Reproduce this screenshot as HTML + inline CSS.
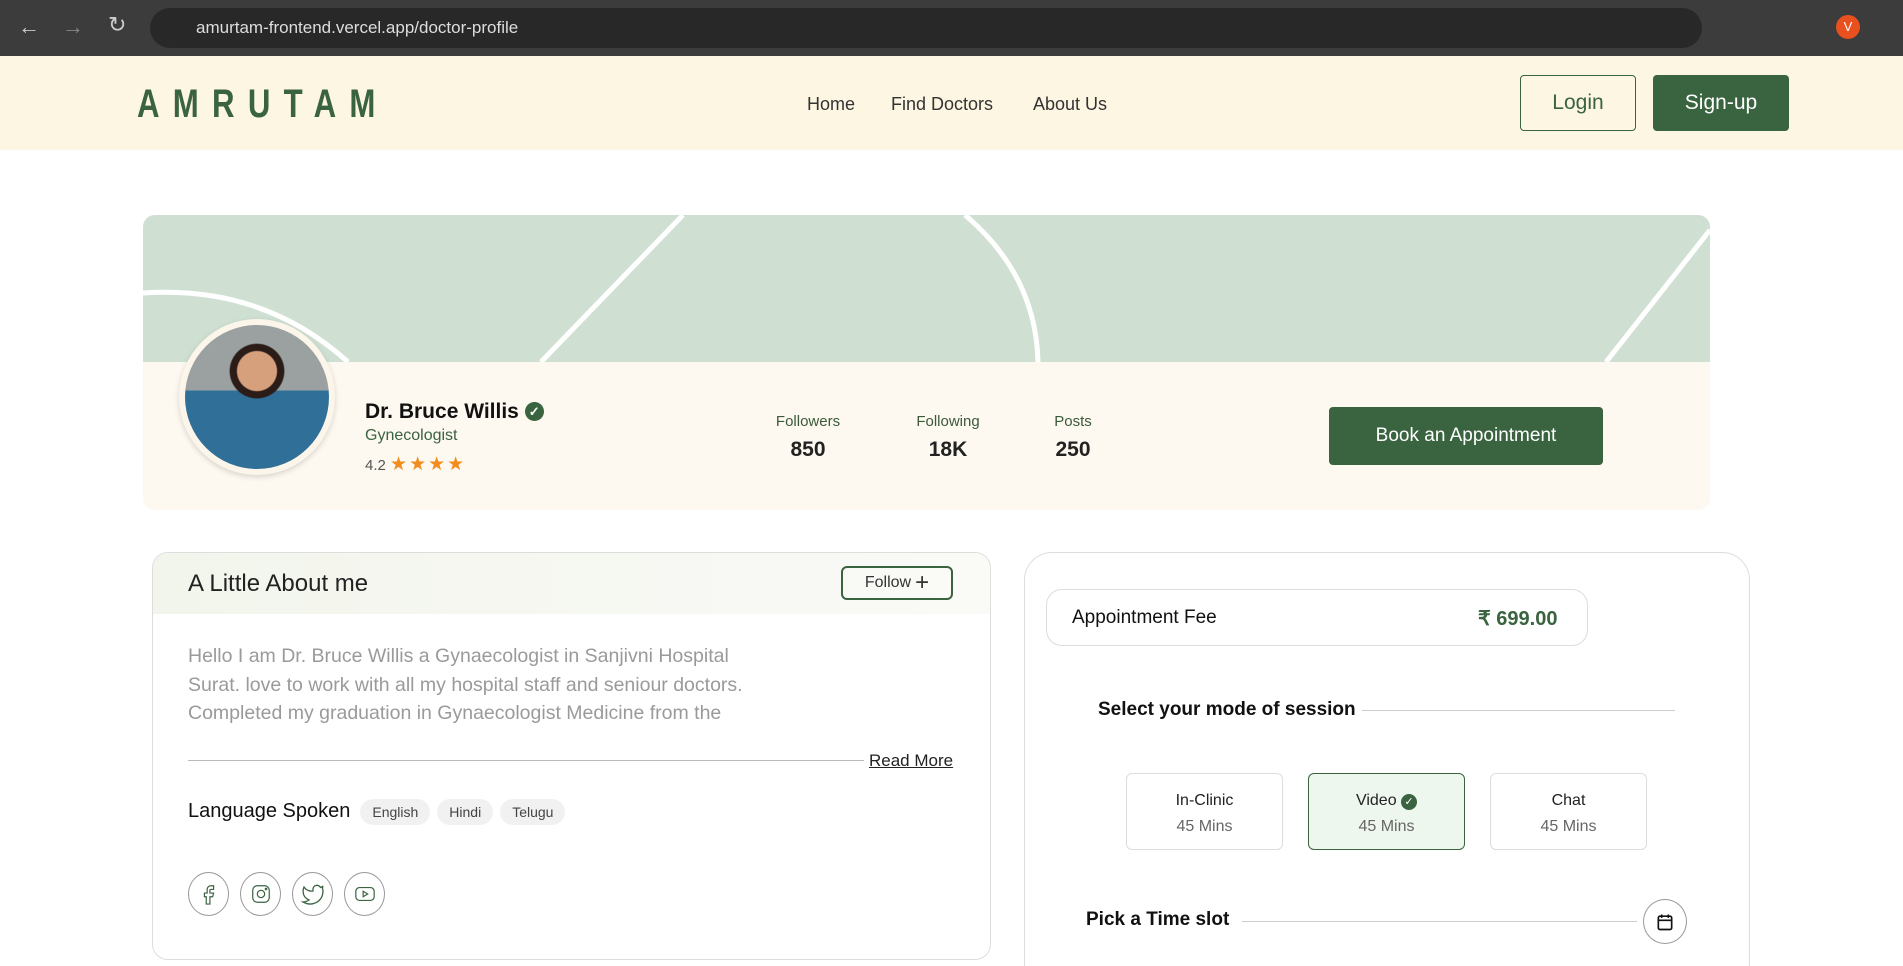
<!DOCTYPE html>
<html style="overflow:hidden;height:966px"><head><meta charset="utf-8"><style>
*{box-sizing:border-box;margin:0;padding:0}
body{width:1903px;height:966px;overflow:hidden;background:#fff;font-family:"Liberation Sans",sans-serif;color:#111}
#wrap{position:relative;width:1903px;height:966px;overflow:hidden}
.abs{position:absolute}
.chrome{left:0;top:0;width:1903px;height:56px;background:#3c3c3c}
.url{left:150px;top:8px;width:1552px;height:40px;border-radius:20px;background:#282828;color:#ddd;font-size:17px;line-height:40px;padding-left:46px}
.hdr{left:0;top:56px;width:1903px;height:94px;background:#fdf6e2}
.logo{left:137px;top:82px;font-size:40px;font-weight:bold;color:#3a6340;letter-spacing:17px;transform:scaleX(.78);transform-origin:left}
.nav{top:94px;font-size:18px;color:#333}
.btn{display:flex;align-items:center;justify-content:center;border-radius:4px;font-size:21px}
.green{background:#3a6340;color:#fff}
.card{left:143px;top:215px;width:1567px;height:295px;border-radius:12px;background:#fdf8f0;overflow:hidden}
.stat{text-align:center;width:140px}
.stat .l{font-size:15px;color:#3a5a3a}
.stat .v{font-size:21px;font-weight:bold;margin-top:8px;color:#222}
.box{border:1px solid #ddd;border-radius:16px;background:#fff}
.chip{display:inline-block;background:#f1f1f1;border-radius:14px;padding:5px 12px;font-size:14px;color:#444;margin-left:7px}
.soc{width:41px;height:44px;border:1px solid #999;border-radius:50%;display:flex;align-items:center;justify-content:center}
.mode{width:157px;height:77px;border:1px solid #ddd;border-radius:6px;text-align:center;font-size:16px;padding-top:18px;color:#222}
.mode .m{color:#666;margin-top:8px}
</style></head><body><div id="wrap">
<div class="abs chrome"></div>
<div class="abs" style="left:18px;top:14px;color:#ccc;font-size:22px">←</div>
<div class="abs" style="left:62px;top:14px;color:#888;font-size:22px">→</div>
<div class="abs" style="left:108px;top:12px;color:#ccc;font-size:22px">↻</div>
<div class="abs url">amurtam-frontend.vercel.app/doctor-profile</div>
<div class="abs" style="left:1836px;top:15px;width:24px;height:24px;border-radius:50%;background:#e8501f;color:#fff;font-size:13px;text-align:center;line-height:24px">V</div>
<div class="abs hdr"></div>
<div class="abs logo">AMRUTAM</div>
<div class="abs nav" style="left:807px">Home</div>
<div class="abs nav" style="left:891px">Find Doctors</div>
<div class="abs nav" style="left:1033px">About Us</div>
<div class="abs btn" style="left:1520px;top:75px;width:116px;height:56px;border:1.5px solid #3a6340;color:#3a6340">Login</div>
<div class="abs btn green" style="left:1653px;top:75px;width:136px;height:56px">Sign-up</div>

<div class="abs card">
<div style="position:absolute;left:0;top:0;width:1567px;height:147px;background:#cfe0d3"></div>
<svg style="position:absolute;left:0;top:0" width="1567" height="147"><g fill="none" stroke="#fff" stroke-width="5">
<path d="M0,78 Q120,70 205,147"/><path d="M540,0 L398,147"/><path d="M822,0 Q893,60 895,147"/><path d="M1567,15 L1463,147"/></g></svg>
</div>
<div class="abs" style="left:179px;top:319px;width:156px;height:156px;border-radius:50%;background:#fbf5ea;box-shadow:0 2px 6px rgba(0,0,0,.15)"></div>
<div class="abs" style="left:185px;top:325px;width:144px;height:144px;border-radius:50%;background:radial-gradient(circle at 50% 32%,#d7a07c 0 16%,#2b1c18 17% 22%,transparent 23%),linear-gradient(180deg,#9aa1a0 0 45%,#2f6f98 46% 100%);overflow:hidden"></div>
<div class="abs" style="left:365px;top:400px;font-size:21px;font-weight:bold;color:#111">Dr. Bruce Willis <span style="display:inline-block;width:19px;height:19px;border-radius:50%;background:#3a6340;color:#fff;font-size:13px;text-align:center;line-height:19px;vertical-align:2px">✓</span></div>
<div class="abs" style="left:365px;top:427px;font-size:16px;color:#3a6340">Gynecologist</div>
<div class="abs" style="left:365px;top:453px;font-size:15px;color:#555">4.2 <span style="color:#f28c1c;font-size:19px;letter-spacing:2px">★★★★</span></div>
<div class="abs stat" style="left:738px;top:413px"><div class="l">Followers</div><div class="v">850</div></div>
<div class="abs stat" style="left:878px;top:413px"><div class="l">Following</div><div class="v">18K</div></div>
<div class="abs stat" style="left:1003px;top:413px"><div class="l">Posts</div><div class="v">250</div></div>
<div class="abs btn green" style="left:1329px;top:407px;width:274px;height:58px;font-size:19px">Book an Appointment</div>

<div class="abs box" style="left:152px;top:552px;width:839px;height:408px;overflow:hidden">
<div style="height:61px;background:linear-gradient(90deg,#f2f5ec,#fafaf7)"></div>
</div>
<div class="abs" style="left:188px;top:570px;font-size:24px;color:#222">A Little About me</div>
<div class="abs btn" style="left:841px;top:566px;width:112px;height:34px;border:2px solid #3a6340;border-radius:6px;font-size:16px;color:#333">Follow <span style="font-size:24px;margin-left:4px">+</span></div>
<div class="abs" style="left:188px;top:642px;font-size:19.5px;line-height:28.5px;color:#9a9a9a">Hello I am Dr. Bruce Willis a Gynaecologist in Sanjivni Hospital<br>Surat. love to work with all my hospital staff and seniour doctors.<br>Completed my graduation in Gynaecologist Medicine from the</div>
<div class="abs" style="left:188px;top:760px;width:676px;height:1px;background:#bbb"></div>
<div class="abs" style="left:869px;top:751px;font-size:17px;color:#222;text-decoration:underline">Read More</div>
<div class="abs" style="left:188px;top:799px;font-size:20px;color:#111">Language Spoken<span class="chip" style="margin-left:10px">English</span><span class="chip">Hindi</span><span class="chip">Telugu</span></div>
<div class="abs" style="left:188px;top:872px;display:flex;gap:11px">
<div class="soc"><svg width="22" height="24" viewBox="0 0 24 24" fill="none" stroke="#3a6340" stroke-width="1.3"><path d="M14 3h3v4h-3a1 1 0 0 0-1 1v3h4l-1 4h-3v8h-4v-8H7v-4h3V7a4 4 0 0 1 4-4z"/></svg></div>
<div class="soc"><svg width="22" height="24" viewBox="0 0 24 24" fill="none" stroke="#3a6340" stroke-width="1.3"><rect x="3" y="3" width="18" height="18" rx="5"/><circle cx="12" cy="12" r="4"/><circle cx="17.5" cy="6.5" r=".8"/></svg></div>
<div class="soc"><svg width="24" height="24" viewBox="0 0 24 24" fill="none" stroke="#3a6340" stroke-width="1.3"><path d="M22 4s-1 1-2.5 1.5A4 4 0 0 0 12 8v1A9.5 9.5 0 0 1 3 5s-4 9 5 13a11 11 0 0 1-6 2c9 5 20 0 20-11.5 0-.3 0-.6-.1-.9C21 6.5 22 4 22 4z"/></svg></div>
<div class="soc"><svg width="22" height="22" viewBox="0 0 24 24" fill="none" stroke="#3a6340" stroke-width="1.3"><rect x="2" y="5" width="20" height="14" rx="4"/><path d="M10 9l5 3-5 3z"/></svg></div>
</div>

<div class="abs" style="left:1024px;top:552px;width:726px;height:460px;border:1px solid #ddd;border-radius:28px"></div>
<div class="abs box" style="left:1046px;top:589px;width:542px;height:57px"></div>
<div class="abs" style="left:1072px;top:607px;font-size:19px;color:#111">Appointment Fee</div>
<div class="abs" style="left:1478px;top:606px;font-size:20px;color:#3a6340;font-weight:bold">₹ 699.00</div>
<div class="abs" style="left:1098px;top:699px;font-size:19px;font-weight:bold;color:#111">Select your mode of session</div>
<div class="abs" style="left:1362px;top:710px;width:313px;height:1px;background:#ccc"></div>
<div class="abs mode" style="left:1126px;top:773px">In-Clinic<div class="m">45 Mins</div></div>
<div class="abs mode" style="left:1308px;top:773px;background:#eef7ee;border-color:#3a6340">Video <span style="display:inline-block;width:16px;height:16px;border-radius:50%;background:#3a6340;color:#fff;font-size:11px;line-height:16px">✓</span><div class="m">45 Mins</div></div>
<div class="abs mode" style="left:1490px;top:773px">Chat<div class="m">45 Mins</div></div>
<div class="abs" style="left:1086px;top:909px;font-size:19px;font-weight:bold;color:#111">Pick a Time slot</div>
<div class="abs" style="left:1242px;top:921px;width:395px;height:1px;background:#ccc"></div>
<div class="abs" style="left:1643px;top:899px;width:44px;height:45px;border:1px solid #999;border-radius:50%;display:flex;align-items:center;justify-content:center"><svg width="20" height="20" viewBox="0 0 24 24" fill="none" stroke="#111" stroke-width="2"><rect x="4" y="5" width="16" height="16" rx="2"/><path d="M4 10h16M8 3v4M16 3v4"/></svg></div>
</div></body></html>
